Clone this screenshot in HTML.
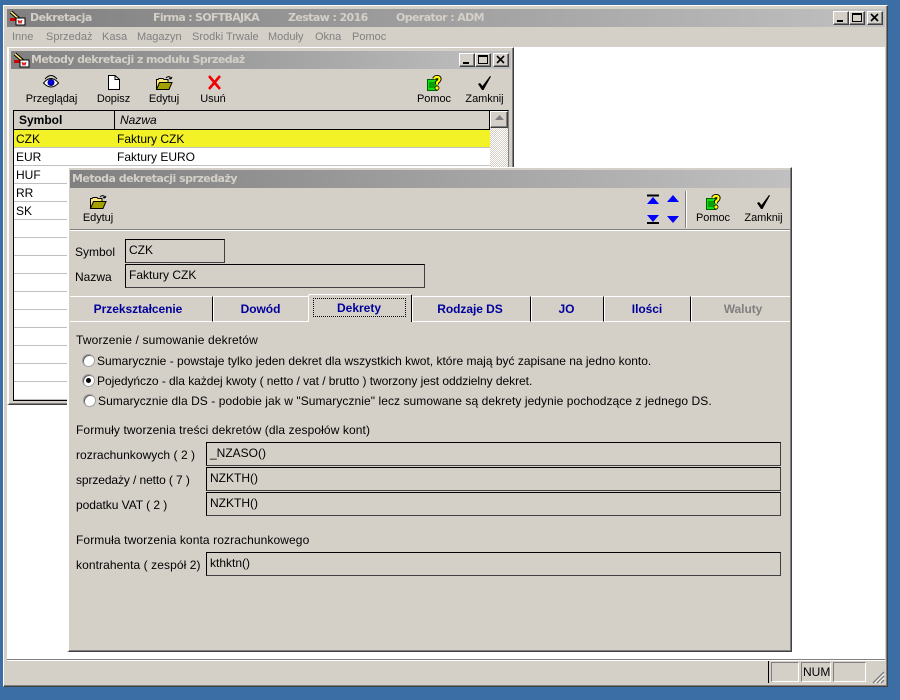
<!DOCTYPE html>
<html><head><meta charset="utf-8">
<style>
html,body{margin:0;padding:0;width:900px;height:700px;overflow:hidden;background:#3a6ea5}
*{box-sizing:border-box}
.a{position:absolute}
.t{position:absolute;white-space:nowrap;font:12px/14px "Liberation Sans",Arial,sans-serif;color:#000}
.c{transform:translateX(-50%);font-size:11px;letter-spacing:-.05px}
.tb{position:absolute;white-space:nowrap;font:bold 11px/14px "DejaVu Sans",sans-serif;letter-spacing:-.55px;color:#d4d0c8}
.m{position:absolute;white-space:nowrap;font:11px/14px "Liberation Sans",sans-serif;color:#808080;top:30px}
.btn{position:absolute;width:16px;height:14px;background:#d4d0c8;border:1px solid;border-color:#fff #404040 #404040 #fff;box-shadow:inset -1px -1px 0 #808080}
.row{position:absolute;left:14px;width:476px;height:18px;background:#fff;border-bottom:1px solid #c0c0c0}
.fld{position:absolute;background:#d4d0c8;border:1px solid #000;border-right-color:#404040;border-bottom-color:#404040}
.tab{position:absolute;top:296px;height:26px;border-top:1px solid #fff;border-bottom:1px solid #fff;border-left:1px solid #fff;border-right:1px solid #000;text-align:center;font:bold 12px/25px "Liberation Sans",sans-serif;letter-spacing:-.05px;color:#00009c;background:#d4d0c8;padding-right:1px}
.r{position:absolute;width:13px;height:13px;border-radius:50%;background:#fff;border:1px solid #a0a0a0;box-shadow:inset 1px 1px 0 #606060}
svg{position:absolute;overflow:visible}
</style></head><body>

<!-- main window -->
<div class="a" style="left:3px;top:5px;width:885px;height:682px;background:#d4d0c8;border:1px solid;border-color:#fff #404040 #404040 #fff;box-shadow:inset -1px -1px 0 #808080"></div>
<div class="a" style="left:7px;top:9px;width:878px;height:18px;background:linear-gradient(90deg,#808080,#c0c0c0)"></div>
<svg style="left:9px;top:10px" width="18" height="16" viewBox="0 0 18 16"><path d="M2 2 L10 9" stroke="#000" stroke-width="3.500"/><path d="M2 2L10 9" stroke="#ffe97a" stroke-width="1.500"/><rect x="1" y="8" width="7" height="3" fill="#d00000"/><rect x="7" y="8" width="9" height="7" fill="#fff" stroke="#000"/><path d="M9 10l1 3 1-2 1 2 1-3" stroke="#c00" fill="none"/></svg>
<div class="tb" style="left:30px;top:11px">Dekretacja</div>
<div class="tb" style="left:153px;top:11px;letter-spacing:-.7px">Firma : SOFTBAJKA</div>
<div class="tb" style="left:288px;top:11px;letter-spacing:-.6px">Zestaw : 2016</div>
<div class="tb" style="left:396px;top:11px;letter-spacing:-.6px">Operator : ADM</div>
<div class="btn" style="left:833px;top:11px"></div><div class="a" style="left:837px;top:20px;width:6px;height:2px;background:#000"></div>
<div class="btn" style="left:849px;top:11px"></div><div class="a" style="left:852px;top:13px;width:10px;height:9px;border:1px solid #000;border-top-width:2px"></div>
<div class="btn" style="left:867px;top:11px"></div><svg style="left:867px;top:11px" width="16" height="14"><path d="M4 3l7 7M11 3l-7 7" stroke="#000" stroke-width="1.600"/></svg>

<div class="m" style="left:12px">Inne</div><div class="m" style="left:46px">Sprzedaż</div><div class="m" style="left:102px">Kasa</div><div class="m" style="left:137px">Magazyn</div><div class="m" style="left:192px">Srodki Trwale</div><div class="m" style="left:268px">Moduły</div><div class="m" style="left:315px">Okna</div><div class="m" style="left:352px">Pomoc</div>

<div class="a" style="left:7px;top:47px;width:878px;height:612px;background:#fff"></div>
<div class="a" style="left:7px;top:659px;width:878px;height:1px;background:#808080"></div>
<div class="a" style="left:7px;top:660px;width:878px;height:1px;background:#fff"></div>

<!-- status bar -->
<div class="a" style="left:768px;top:661px;width:1px;height:22px;background:#000"></div>
<div class="a" style="left:771px;top:662px;width:28px;height:20px;border:1px solid;border-color:#808080 #fff #fff #808080"></div>
<div class="a" style="left:801px;top:662px;width:30px;height:20px;border:1px solid;border-color:#808080 #fff #fff #808080"></div>
<div class="t" style="left:803px;top:665px">NUM</div>
<div class="a" style="left:833px;top:662px;width:33px;height:20px;border:1px solid;border-color:#808080 #fff #fff #808080"></div>
<svg style="left:872px;top:671px" width="13" height="13"><path d="M1 12L12 1M5 12L12 5M9 12L12 9" stroke="#808080" stroke-width="1.400"/><path d="M3 12L12 3M7 12L12 7" stroke="#fff"/></svg>

<!-- child window -->
<div class="a" style="left:7px;top:47px;width:507px;height:358px;background:#d4d0c8;border:solid;border-width:1px 1px 1px 2px;border-color:#fff #404040 #404040 #fff;box-shadow:inset -1px -1px 0 #808080"></div>
<div class="a" style="left:11px;top:51px;width:500px;height:18px;background:linear-gradient(90deg,#808080,#c0c0c0)"></div>
<svg style="left:13px;top:52px" width="18" height="16" viewBox="0 0 18 16"><path d="M2 2 L10 9" stroke="#000" stroke-width="3.500"/><path d="M2 2L10 9" stroke="#ffe97a" stroke-width="1.500"/><rect x="1" y="8" width="7" height="3" fill="#d00000"/><rect x="7" y="8" width="9" height="7" fill="#fff" stroke="#000"/><path d="M9 10l1 3 1-2 1 2 1-3" stroke="#c00" fill="none"/></svg>
<div class="tb" style="left:31px;top:53px;letter-spacing:-.57px">Metody dekretacji z modułu Sprzedaż</div>
<div class="btn" style="left:459px;top:53px"></div><div class="a" style="left:463px;top:62px;width:6px;height:2px;background:#000"></div>
<div class="btn" style="left:475px;top:53px"></div><div class="a" style="left:478px;top:55px;width:10px;height:9px;border:1px solid #000;border-top-width:2px"></div>
<div class="btn" style="left:493px;top:53px"></div><svg style="left:493px;top:53px" width="16" height="14"><path d="M4 3l7 7M11 3l-7 7" stroke="#000" stroke-width="1.600"/></svg>

<!-- child toolbar icons -->
<svg style="left:43px;top:75px" width="16" height="15" viewBox="0 0 16 15"><path d="M.5 8Q8 -1 15.500 8Q8 16 .5 8Z" fill="#fff" stroke="#000"/><path d="M2 4Q8 -3 14 4" fill="none" stroke="#000"/><circle cx="8" cy="7.500" r="3" fill="#0000e0" stroke="#000080"/></svg>
<svg style="left:108px;top:75px" width="12" height="15" viewBox="0 0 12 15"><path d="M.5 .5H7L11.500 4.500V14.500H.5Z" fill="#fff" stroke="#000"/><path d="M7 .5V4.500H11.500" fill="none" stroke="#000"/></svg>
<svg style="left:156px;top:76px" width="17" height="14" viewBox="0 0 17 14"><path d="M.5 13V3.500H2L3 2.500H7L8 3.500H12V6" fill="#ffe97a" stroke="#000"/><path d="M.5 13.500L3.500 6.500H16L13 13.500Z" fill="#a3a000" stroke="#000"/><path d="M10 2Q12 0 14 1L15 3M15 3l1-2M15 3l-2-.5" fill="none" stroke="#000"/></svg>
<svg style="left:208px;top:76px" width="13" height="13" viewBox="0 0 13 13"><path d="M1 0L12 13M12 0L1 13" stroke="#f00000" stroke-width="2.600"/></svg>
<svg style="left:426px;top:75px" width="16" height="17" viewBox="0 0 16 17"><path d="M1.500 4.500H11V15.500H1.500Z" fill="#10e010" stroke="#006000"/><path d="M3 8H9M3 10H9M3 12H9" stroke="#006000"/><path d="M8 4Q9 2 11 2Q14 2 13.500 4.500Q13 6 11 7.500V9.500" fill="none" stroke="#000" stroke-width="4"/><path d="M8 4Q9 2 11 2Q14 2 13.500 4.500Q13 6 11 7.500V9.500" fill="none" stroke="#ffff00" stroke-width="2.200"/><circle cx="11" cy="13" r="2" fill="#ffff00" stroke="#000" stroke-width=".8"/></svg>
<svg style="left:478px;top:76px" width="13" height="14" viewBox="0 0 13 14"><path d="M0 8L2 7L4.500 10L12 0L13 .5L5.500 14H4Z" fill="#000"/></svg>

<div class="t c" style="left:51.500px;top:92px">Przeglądaj</div>
<div class="t c" style="left:113.500px;top:92px">Dopisz</div>
<div class="t c" style="left:164px;top:92px">Edytuj</div>
<div class="t c" style="left:213px;top:92px">Usuń</div>
<div class="t c" style="left:434px;top:92px">Pomoc</div>
<div class="t c" style="left:484.500px;top:92px">Zamknij</div>

<!-- table -->
<div class="a" style="left:13px;top:110px;width:496px;height:291px;border:1px solid #000;border-color:#000 #808080 #000 #000;background:#fff"></div>
<div class="a" style="left:14px;top:111px;width:476px;height:18px;background:#d4d0c8"></div>
<div class="a" style="left:14px;top:129px;width:476px;height:1px;background:#000"></div>
<div class="a" style="left:114px;top:111px;width:1px;height:18px;background:#000"></div>
<div class="t" style="left:19px;top:113px;font-weight:bold">Symbol</div>
<div class="t" style="left:120px;top:113px;font-style:italic">Nazwa</div>
<div class="a" style="left:489px;top:110px;width:1px;height:291px;background:#000"></div>
<div class="a" style="left:490px;top:111px;width:18px;height:289px;background:repeating-conic-gradient(#fff 0 25%,#d4d0c8 0 50%) 0 0/2px 2px"></div>
<div class="a" style="left:490px;top:111px;width:18px;height:17px;background:#d4d0c8;border:1px solid;border-color:#fff #404040 #404040 #fff;box-shadow:inset -1px -1px 0 #808080"></div>
<svg style="left:495px;top:115px" width="9" height="6"><path d="M0 5H9L4.500 0Z" fill="#808080"/></svg>

<div class="row" style="top:130px;background:#f2f226"></div>
<div class="row" style="top:148px"></div>
<div class="row" style="top:166px"></div>
<div class="row" style="top:184px"></div>
<div class="row" style="top:202px"></div>
<div class="row" style="top:220px"></div>
<div class="row" style="top:238px"></div>
<div class="row" style="top:256px"></div>
<div class="row" style="top:274px"></div>
<div class="row" style="top:292px"></div>
<div class="row" style="top:310px"></div>
<div class="row" style="top:328px"></div>
<div class="row" style="top:346px"></div>
<div class="row" style="top:364px"></div>
<div class="row" style="top:382px"></div>
<div class="t" style="left:16px;top:132px">CZK</div><div class="t" style="left:117px;top:132px">Faktury CZK</div>
<div class="t" style="left:16px;top:150px">EUR</div><div class="t" style="left:117px;top:150px">Faktury EURO</div>
<div class="t" style="left:16px;top:168px">HUF</div>
<div class="t" style="left:16px;top:186px">RR</div>
<div class="t" style="left:16px;top:204px">SK</div>

<!-- dialog -->
<div class="a" style="left:67px;top:167px;width:725px;height:485px;background:#d4d0c8;border:solid;border-width:1px 1px 1px 2px;border-color:#fff #404040 #404040 #fff;box-shadow:inset -1px -1px 0 #808080"></div>
<div class="a" style="left:70px;top:170px;width:720px;height:18px;background:linear-gradient(90deg,#808080,#c0c0c0)"></div>
<div class="tb" style="left:72px;top:172px;letter-spacing:-.52px">Metoda dekretacji sprzedaży</div>

<svg style="left:90px;top:195px" width="17" height="14" viewBox="0 0 17 14"><path d="M.5 13V3.500H2L3 2.500H7L8 3.500H12V6" fill="#ffe97a" stroke="#000"/><path d="M.5 13.500L3.500 6.500H16L13 13.500Z" fill="#a3a000" stroke="#000"/><path d="M10 2Q12 0 14 1L15 3M15 3l1-2M15 3l-2-.5" fill="none" stroke="#000"/></svg>
<div class="t c" style="left:98px;top:211px">Edytuj</div>

<svg style="left:647px;top:195px" width="33" height="30" viewBox="0 0 33 30"><path d="M0 0.500H12" stroke="#000" stroke-width="2"/><path d="M6 2L12 9H0Z M26 0L32 7H20Z" fill="#0000ff"/><path d="M0 20H12L6 27Z M20 21H32L26 28Z" fill="#0000ff"/><path d="M0 28H12" stroke="#000" stroke-width="2"/></svg>
<div class="a" style="left:685px;top:191px;width:1px;height:37px;background:#808080"></div>
<div class="a" style="left:686px;top:191px;width:1px;height:37px;background:#fff"></div>

<svg style="left:705px;top:194px" width="16" height="17" viewBox="0 0 16 17"><path d="M1.500 4.500H11V15.500H1.500Z" fill="#10e010" stroke="#006000"/><path d="M3 8H9M3 10H9M3 12H9" stroke="#006000"/><path d="M8 4Q9 2 11 2Q14 2 13.500 4.500Q13 6 11 7.500V9.500" fill="none" stroke="#000" stroke-width="4"/><path d="M8 4Q9 2 11 2Q14 2 13.500 4.500Q13 6 11 7.500V9.500" fill="none" stroke="#ffff00" stroke-width="2.200"/><circle cx="11" cy="13" r="2" fill="#ffff00" stroke="#000" stroke-width=".8"/></svg>
<svg style="left:757px;top:195px" width="13" height="14" viewBox="0 0 13 14"><path d="M0 8L2 7L4.500 10L12 0L13 .5L5.500 14H4Z" fill="#000"/></svg>
<div class="t c" style="left:713px;top:211px">Pomoc</div>
<div class="t c" style="left:763.500px;top:211px">Zamknij</div>

<div class="a" style="left:70px;top:229px;width:720px;height:1px;background:#808080"></div>
<div class="a" style="left:70px;top:230px;width:720px;height:1px;background:#fff"></div>

<div class="t" style="left:75px;top:245px">Symbol</div>
<div class="t" style="left:75px;top:270px">Nazwa</div>
<div class="fld" style="left:125px;top:239px;width:100px;height:24px"></div>
<div class="fld" style="left:125px;top:264px;width:300px;height:24px"></div>
<div class="t" style="left:129px;top:243px">CZK</div>
<div class="t" style="left:129px;top:268px">Faktury CZK</div>

<!-- tabs -->
<div class="tab" style="left:70px;width:143px;padding-right:6px;border-left:0">Przekształcenie</div>
<div class="tab" style="left:213px;width:96px">Dowód</div>
<div class="tab" style="left:412px;width:119px;padding-right:3px">Rodzaje DS</div>
<div class="tab" style="left:531px;width:73px;padding-right:2px">JO</div>
<div class="tab" style="left:604px;width:87px">Ilości</div>
<div class="tab" style="left:691px;width:99px;border-right:0;padding-left:4px;padding-right:0;color:#808080">Waluty</div>
<div class="a" style="left:308px;top:294px;width:104px;height:28px;background:#d4d0c8;border-top:1px solid #fff;border-left:1px solid #fff;border-right:1px solid #000;border-radius:2px 2px 0 0"></div>
<div class="a" style="left:313px;top:298px;width:93px;height:19px;border:1px dotted #000"></div>
<div class="t" style="left:359px;top:301px;transform:translateX(-50%);font-weight:bold;color:#00009c">Dekrety</div>

<div class="t" style="left:76px;top:333px;letter-spacing:.15px">Tworzenie / sumowanie dekretów</div>
<div class="r" style="left:82px;top:354px"></div>
<div class="t" style="left:97px;top:354px">Sumarycznie - powstaje tylko jeden dekret dla wszystkich kwot, które mają być zapisane na jedno konto.</div>
<div class="r" style="left:82px;top:374px"></div><div class="a" style="left:86px;top:378px;width:5px;height:5px;border-radius:50%;background:#000"></div>
<div class="t" style="left:97px;top:374px;letter-spacing:-.05px">Pojedyńczo - dla każdej kwoty ( netto / vat / brutto ) tworzony jest oddzielny dekret.</div>
<div class="r" style="left:83px;top:394px"></div>
<div class="t" style="left:98px;top:394px;letter-spacing:.065px">Sumarycznie dla DS - podobie jak w "Sumarycznie" lecz sumowane są dekrety jedynie pochodzące z jednego DS.</div>

<div class="t" style="left:76px;top:423px;letter-spacing:.1px">Formuły tworzenia treści dekretów (dla zespołów kont)</div>
<div class="t" style="left:76px;top:448px;letter-spacing:.05px">rozrachunkowych ( 2 )</div>
<div class="t" style="left:76px;top:473px;letter-spacing:-.1px">sprzedaży / netto ( 7 )</div>
<div class="t" style="left:76px;top:498px;letter-spacing:-.05px">podatku VAT ( 2 )</div>
<div class="fld" style="left:206px;top:442px;width:575px;height:24px"></div>
<div class="fld" style="left:206px;top:467px;width:575px;height:24px"></div>
<div class="fld" style="left:206px;top:492px;width:575px;height:24px"></div>
<div class="t" style="left:210px;top:446px">_NZASO()</div>
<div class="t" style="left:210px;top:471px">NZKTH()</div>
<div class="t" style="left:210px;top:496px">NZKTH()</div>

<div class="t" style="left:76px;top:533px;letter-spacing:.1px">Formuła tworzenia konta rozrachunkowego</div>
<div class="t" style="left:76px;top:558px;letter-spacing:.08px">kontrahenta ( zespół 2)</div>
<div class="fld" style="left:206px;top:552px;width:575px;height:24px"></div>
<div class="t" style="left:210px;top:556px">kthktn()</div>

</body></html>
